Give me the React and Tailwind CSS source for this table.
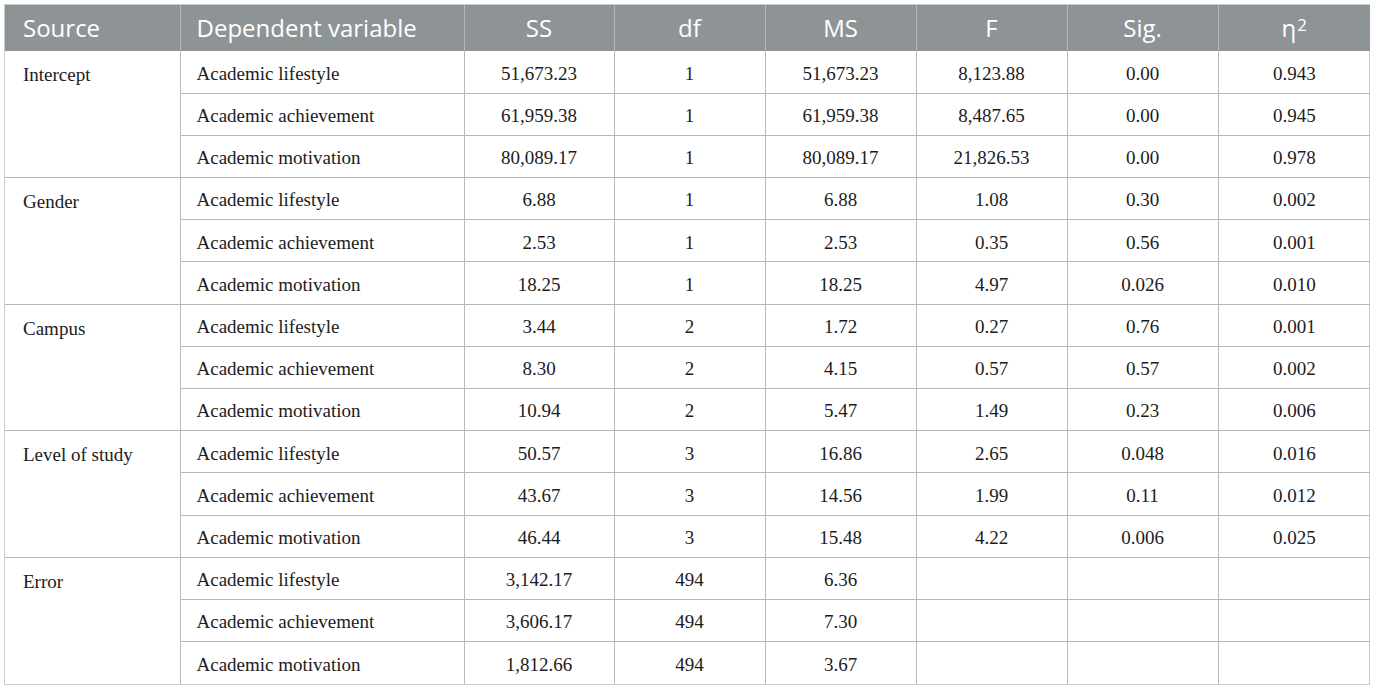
const groups = [
  {
    source: "Intercept",
    rows: [
      ["Academic lifestyle", "51,673.23", "1", "51,673.23", "8,123.88", "0.00", "0.943"],
      ["Academic achievement", "61,959.38", "1", "61,959.38", "8,487.65", "0.00", "0.945"],
      ["Academic motivation", "80,089.17", "1", "80,089.17", "21,826.53", "0.00", "0.978"],
    ],
  },
  {
    source: "Gender",
    rows: [
      ["Academic lifestyle", "6.88", "1", "6.88", "1.08", "0.30", "0.002"],
      ["Academic achievement", "2.53", "1", "2.53", "0.35", "0.56", "0.001"],
      ["Academic motivation", "18.25", "1", "18.25", "4.97", "0.026", "0.010"],
    ],
  },
  {
    source: "Campus",
    rows: [
      ["Academic lifestyle", "3.44", "2", "1.72", "0.27", "0.76", "0.001"],
      ["Academic achievement", "8.30", "2", "4.15", "0.57", "0.57", "0.002"],
      ["Academic motivation", "10.94", "2", "5.47", "1.49", "0.23", "0.006"],
    ],
  },
  {
    source: "Level of study",
    rows: [
      ["Academic lifestyle", "50.57", "3", "16.86", "2.65", "0.048", "0.016"],
      ["Academic achievement", "43.67", "3", "14.56", "1.99", "0.11", "0.012"],
      ["Academic motivation", "46.44", "3", "15.48", "4.22", "0.006", "0.025"],
    ],
  },
  {
    source: "Error",
    rows: [
      ["Academic lifestyle", "3,142.17", "494", "6.36", "", "", ""],
      ["Academic achievement", "3,606.17", "494", "7.30", "", "", ""],
      ["Academic motivation", "1,812.66", "494", "3.67", "", "", ""],
    ],
  },
];

const widths = ["w-[175px]", "w-[284px]", "w-[150px]", "w-[151px]", "w-[151px]", "w-[151px]", "w-[151px]", "w-[152px]"];

export default function App() {
  return (
    <div className="w-[1375px] h-[690px] bg-white pt-1 pl-1">
      <div className="w-[1366px] border border-[#c6cdca]">
        <table className="w-[1364px] table-fixed border-collapse text-[#1c1c1c]" style={{ fontFamily: '"Liberation Serif", serif' }}>
          <colgroup>
            {widths.map((w, i) => (
              <col key={i} className={w} />
            ))}
          </colgroup>
          <thead>
            <tr className="h-[46px] bg-[#8e9396] text-white text-[24px] leading-none" style={{ fontFamily: '"Open Sans", sans-serif' }}>
              <th className="text-left font-normal pl-[18px] border-r border-[#b3b7b9]">Source</th>
              <th className="text-left font-normal pl-[16px] border-r border-[#b3b7b9]">Dependent variable</th>
              <th className="font-normal border-r border-[#b3b7b9]">SS</th>
              <th className="font-normal border-r border-[#b3b7b9]">df</th>
              <th className="font-normal border-r border-[#b3b7b9]">MS</th>
              <th className="font-normal border-r border-[#b3b7b9]">F</th>
              <th className="font-normal border-r border-[#b3b7b9]">Sig.</th>
              <th className="font-normal">
                η<sup className="text-[17px] relative -top-[6px] ml-px">2</sup>
              </th>
            </tr>
          </thead>
          <tbody className="text-[19px]">
            {groups.map((g, gi) =>
              g.rows.map((r, ri) => {
                const lastRow = gi === groups.length - 1 && ri === g.rows.length - 1;
                const rowBorder = lastRow ? "" : "border-b border-[#b8b8b8]";
                return (
                  <tr key={gi + "-" + ri} className="h-[42.2px]">
                    {ri === 0 && (
                      <td
                        rowSpan={g.rows.length}
                        className={"align-top pl-[18px] pt-[10px] border-r border-[#b8b8b8] " + (gi === groups.length - 1 ? "" : "border-b border-[#b8b8b8]")}
                      >
                        {g.source}
                      </td>
                    )}
                    <td className={"pl-[16px] pt-[4px] border-r border-[#b8b8b8] " + rowBorder}>{r[0]}</td>
                    {r.slice(1).map((v, ci) => (
                      <td
                        key={ci}
                        className={"text-center pt-[4px] " + rowBorder + (ci === 5 ? "" : " border-r border-[#b8b8b8]")}
                      >
                        {v}
                      </td>
                    ))}
                  </tr>
                );
              })
            )}
          </tbody>
        </table>
      </div>
    </div>
  );
}
